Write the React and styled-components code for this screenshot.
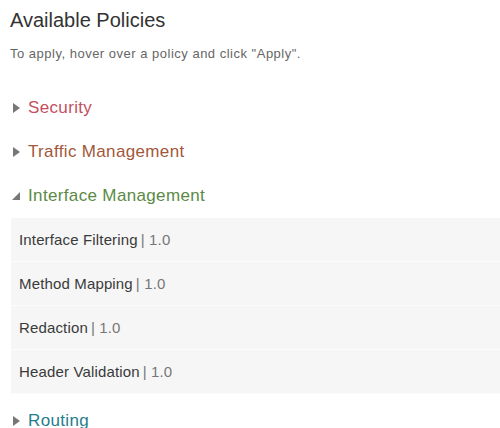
import React from "react";
import styled, { createGlobalStyle } from "styled-components";

const GlobalStyle = createGlobalStyle`
  body {
    margin: 0;
    background: #fff;
    font-family: "Liberation Sans", Arial, sans-serif;
  }
`;

const Page = styled.div`
  padding: 0 0 0 10px;
  height: 428px;
  overflow: hidden;
`;

const Title = styled.h1`
  margin: 6px 0 0;
  font-size: 20px;
  line-height: 28px;
  font-weight: 400;
  color: #333;
`;

const Hint = styled.p`
  margin: 12px 0 0;
  font-size: 13px;
  letter-spacing: 0.5px;
  line-height: 16px;
  color: #666;
`;

const Sections = styled.div`
  margin-top: 24px;
`;

const Header = styled.div`
  display: flex;
  align-items: center;
  gap: 7px;
  height: 44px;
  padding-left: 2px;
  font-size: 17px;
  letter-spacing: 0.35px;
  color: ${({ color }) => color};
  cursor: pointer;
`;

const Items = styled.div`
  margin: 0 0 5px 1px;
`;

const Item = styled.div`
  display: flex;
  align-items: center;
  height: 43px;
  padding-left: 8px;
  background: #f6f6f6;
  border-bottom: 1px solid #fcfcfc;
  font-size: 15px;
  letter-spacing: 0.15px;
  color: #3a3a3a;
`;

const Version = styled.span`
  color: #777;
  margin-left: 3px;
`;

const Caret = ({ open }) =>
  open ? (
    <svg width="9" height="10" viewBox="0 0 9 10">
      <polygon points="8,1 8,9 0,9" fill="#777" />
    </svg>
  ) : (
    <svg width="9" height="10" viewBox="0 0 9 10">
      <polygon points="1,0 8,5 1,10" fill="#777" />
    </svg>
  );

const sections = [
  { name: "Security", color: "#c2505f" },
  { name: "Traffic Management", color: "#a2583a" },
  {
    name: "Interface Management",
    color: "#5a8a46",
    open: true,
    items: [
      "Interface Filtering",
      "Method Mapping",
      "Redaction",
      "Header Validation",
    ],
  },
  { name: "Routing", color: "#1f7d8c" },
];

export default function App() {
  return (
    <>
      <GlobalStyle />
      <Page>
        <Title>Available Policies</Title>
        <Hint>To apply, hover over a policy and click "Apply".</Hint>
        <Sections>
          {sections.map((s) => (
            <div key={s.name}>
              <Header color={s.color}>
                <Caret open={s.open} />
                {s.name}
              </Header>
              {s.open && (
                <Items>
                  {s.items.map((it) => (
                    <Item key={it}>
                      {it}
                      <Version>| 1.0</Version>
                    </Item>
                  ))}
                </Items>
              )}
            </div>
          ))}
        </Sections>
      </Page>
    </>
  );
}
